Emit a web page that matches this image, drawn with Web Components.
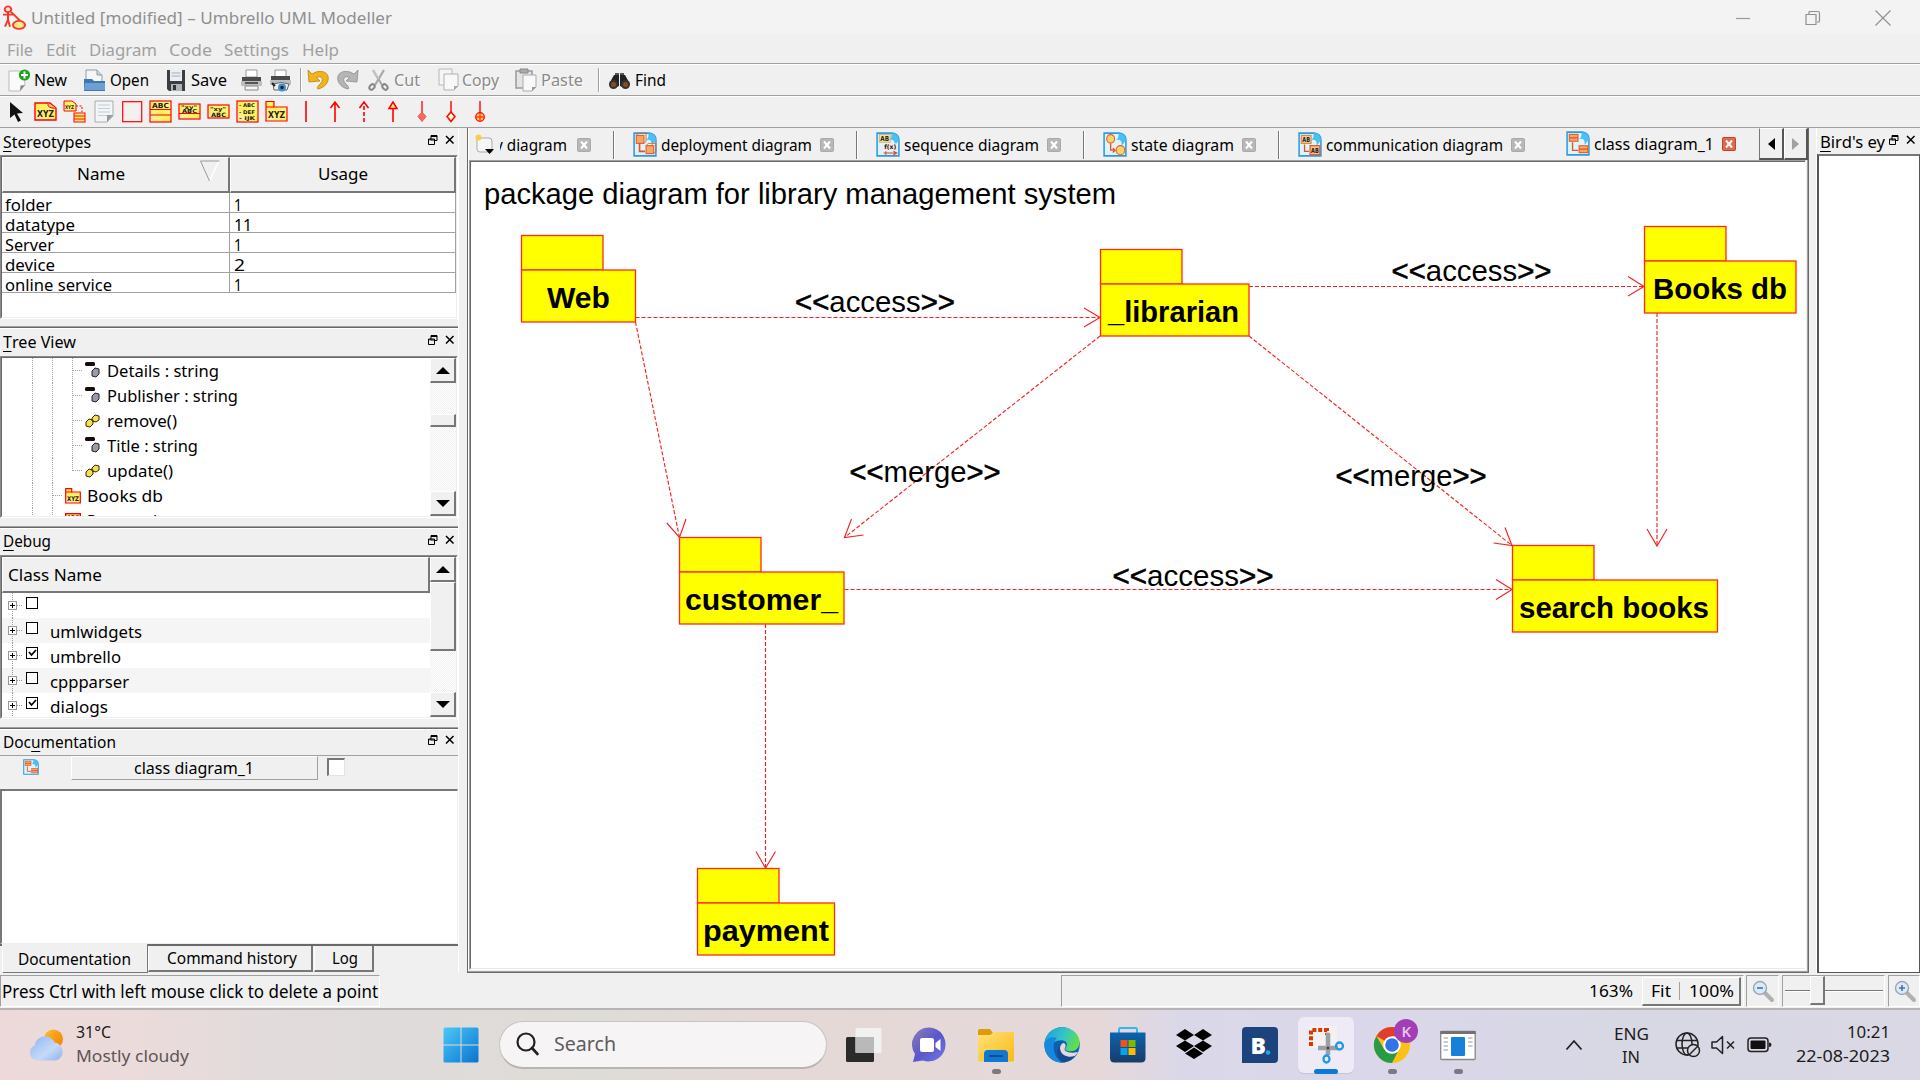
<!DOCTYPE html>
<html lang="en">
<head>
<meta charset="utf-8">
<title>Umbrello UML Modeller</title>
<style>
html,body{margin:0;padding:0}
body{width:1920px;height:1080px;overflow:hidden;background:#f0f0f0;color:#000;font-family:"Noto Sans","Open Sans",sans-serif;font-size:17px}
</style>
</head>
<body>
<app-window></app-window>
<script>
const define = (name, css, html, after) => customElements.define(name, class extends HTMLElement {
  connectedCallback() {
    if (this.shadowRoot) return;
    const root = this.attachShadow({ mode: 'open' });
    root.innerHTML = `<style>*{box-sizing:border-box}u{text-decoration:none;border-bottom:1px solid #000;display:inline-block;line-height:17px;height:19px}${css}</style>${typeof html === 'function' ? html(this) : html}`;
    if (after) after(this, root);
  }
});

/* ---------- icons ---------- */
const R = '#f00';
const docPage = inner => `<path d="M1 1h14q6 1 6 6v14H1z" fill="#dff3fb" stroke="#2a9be0" stroke-width="1.4"/><path d="M14 1q1 4-2 6 6-1 5 5 3-3 4-5 0-6-7-6z" fill="#4cc0f5"/>${inner}`;
const ob = (x, y, w = 7, h = 7) => `<rect x="${x}" y="${y}" width="${w}" height="${h}" fill="#f7a868" stroke="#e2602c" stroke-width="1"/>`;
const tx = (x, y, s, t, l) => `<text x="${x}" y="${y}" font-size="${s}" font-weight="700" font-family="DejaVu Sans" textLength="${l}" lengthAdjust="spacingAndGlyphs" fill="#222">${t}</text>`;
const yg = '<linearGradient id="y" x1="1" y1="0" x2="0" y2="1"><stop offset="0" stop-color="#ff8"/><stop offset=".5" stop-color="#ffee58"/><stop offset="1" stop-color="#fff0b8"/></linearGradient>';
const ICONS = {
  app: ['24 30', `<g fill="none" stroke="#f33a2a" stroke-width="2"><circle cx="6" cy="5" r="3.3" fill="#fdd"/><path d="M6 8v9M1 11h10M6 17l-3 8M6 17l2 8M9 8l9 10"/><ellipse cx="17" cy="23" rx="6" ry="4.6" fill="#ffe98a"/></g>`],
  new: ['23 23', `<path d="M1 2h15l1 14-5 6H1z" fill="#fafafa" stroke="#bbb"/><path d="M12 22l.5-5.500 4.500-.5z" fill="#888"/><circle cx="16.500" cy="6" r="5.600" fill="#19a319"/><path d="M16.500 2.500v7M13 6h7" stroke="#fff" stroke-width="2"/>`],
  open: ['23 23', `<path d="M3 1h11l5 5v9H3z" fill="#f4f6f8" stroke="#8f9aa5"/><path d="M14 1v5h5" fill="#cdd6de" stroke="#8f9aa5"/><path d="M1 10h8l2 2h11v10H1z" fill="#3f77b4"/><path d="M2 14h20v7H1z" fill="#6f9fd2"/>`],
  save: ['23 23', `<path d="M2 1h18v21H4l-2-2z" fill="#3a3d42"/><rect x="5" y="1" width="12" height="11" fill="#eceff1"/><path d="M6.500 4h9M6.500 7h9" stroke="#aab"/><rect x="6" y="15" width="11" height="7" fill="#aeb3b8"/><rect x="8" y="16" width="3" height="5" fill="#333"/>`],
  print: ['23 23', `<path d="M6 1h11v7H6z" fill="#fff" stroke="#999"/><rect x="2" y="8" width="19" height="4" fill="#4a4a4a"/><rect x="1" y="12" width="21" height="5" rx="1" fill="#bdbdbd"/><path d="M5 14h13" stroke="#333" stroke-width="1.500"/><path d="M5 17h13v4H5z" fill="#f4f4f4" stroke="#888"/>`],
  preview: ['23 23', `<path d="M6 1h11v7H6z" fill="#fff" stroke="#999"/><rect x="2" y="7" width="19" height="4" fill="#4a4a4a"/><rect x="1" y="11" width="21" height="5" rx="1" fill="#bdbdbd"/><path d="M4 15q8-3 16 0l-2 6H5z" fill="#eee" stroke="#666"/><path d="M3 14l3 3" stroke="#222" stroke-width="2"/><circle cx="13" cy="18.500" r="4" fill="#3e8ed0"/><circle cx="13" cy="18.500" r="1.700" fill="#123"/>`],
  undo: ['23 23', `<path d="M1 1l1 12 11-1-3.500-3.500C15 6 18 11 12 16c-2 2-2 4-1 4 14-3 14-21-2-17L5 5z" fill="#f0b41c" stroke="#b98309" stroke-width=".8"/>`],
  redo: ['23 23', `<path d="M22 1l-1 12-11-1 3.500-3.500C8 6 5 11 11 16c2 2 2 4 1 4C-2 17-2-1 14 3l4 2z" fill="#b5b5b5" stroke="#8d8d8d" stroke-width=".8"/>`],
  cut: ['23 23', `<path d="M6 1l9 15M17 1L8 16" stroke="#a8a8a8" stroke-width="2.200"/><path d="M6 1l6 9" stroke="#d8d8d8"/><ellipse cx="5" cy="18" rx="3" ry="2.300" fill="none" stroke="#888" stroke-width="2" transform="rotate(-50 5 18)"/><ellipse cx="18" cy="18" rx="3" ry="2.300" fill="none" stroke="#888" stroke-width="2" transform="rotate(50 18 18)"/>`],
  copy: ['23 23', `<path d="M2 1h13v16H2z" fill="#f5f5f5" stroke="#b8b8b8"/><path d="M7 6h14v12l-4 4H7z" fill="#f8f8f8" stroke="#b0b0b0"/><path d="M17 22v-4h4z" fill="#aaa"/>`],
  paste: ['23 23', `<path d="M1 3h16v17H1z" fill="#e4e4e4" stroke="#999" stroke-width="1.500"/><path d="M5 1h8v4H5z" fill="#aaa" stroke="#888"/><path d="M8 7h13v12l-4 4H8z" fill="#f8f8f8" stroke="#aaa"/><path d="M17 23v-4h4z" fill="#999"/>`],
  find: ['23 23', `<path d="M7 4h4v9H7zM12 4h4v9h-4z" fill="#555"/><path d="M6 6L1 15l5 4 5-2V6zM17 6l5 9-5 4-5-2V6z" fill="#222"/><circle cx="5.500" cy="15.500" r="4.500" fill="#333"/><circle cx="5.500" cy="15.500" r="2.500" fill="#8a4b22"/><circle cx="17.500" cy="15.500" r="4.500" fill="#333"/><circle cx="17.500" cy="15.500" r="2.500" fill="#8a4b22"/>`],
  cursor: ['23 23', `<path d="M5 2l13 11-6 .5 4 7-3 1.500-3.500-7.500L5 18z" fill="#111"/>`],
  t1: ['23 23', `<path d="M1 3h15l6 5v12H1z" fill="url(#y)" stroke="${R}" stroke-width="1.400"/><path d="M14 3q-1 6 8 5" fill="#fb8" stroke="${R}"/>${tx(3, 17, 8, 'XYZ', 17)}`],
  t2: ['23 23', `<path d="M1 1h8l4 3v7H1z" fill="url(#y)" stroke="${R}"/>${tx(2, 9, 5, 'XYZ', 9)}<path d="M13 6h6v6" fill="none" stroke="${R}" stroke-dasharray="2 1.500"/><rect x="11" y="13" width="11" height="9" fill="url(#y)" stroke="${R}"/><path d="M11 16h11M11 19h11" stroke="${R}"/>`],
  t3: ['23 23', `<path d="M3 1h18v15l-6 6H3z" fill="#f2f5f7" stroke="#aaa"/><path d="M6 5h12M6 8.500h12M6 12h12M6 15.500h9" stroke="#c3cdd4"/><path d="M15 22v-7h6z" fill="#999"/>`],
  t4: ['23 23', `<rect x="1.700" y="1.700" width="19" height="20" fill="#f4f0ef" stroke="${R}" stroke-width="1.200"/>`],
  t5: ['23 23', `<rect x="1" y="1" width="21" height="21" fill="url(#y)" stroke="${R}" stroke-width="1.200"/><path d="M1 9.500h21M1 15h21" stroke="${R}" stroke-width="1.200"/>${tx(3, 8, 7, 'ABC', 17)}`],
  t6: ['23 23', `<rect x="1" y="4" width="21" height="15" fill="url(#y)" stroke="${R}" stroke-width="1.200"/><path d="M1 13.500h21" stroke="${R}"/>${tx(3, 8.5, 5, '"xy"', 16)}${tx(4, 12.500, 5.500, 'ABC', 15)}`],
  t7: ['23 23', `<rect x="1" y="5" width="21" height="13" fill="url(#y)" stroke="${R}" stroke-width="1.200"/>${tx(3, 10.500, 5.500, '"xy"', 16)}${tx(4, 16.500, 6, 'ABC', 15)}`],
  t8: ['23 23', `<rect x="1" y="1" width="21" height="21" fill="url(#y)" stroke="${R}" stroke-width="1.200"/>${tx(3, 7, 5, '- ABC', 16)}${tx(3, 14, 5, '- DEF', 16)}${tx(3, 20, 5, '- IJK', 16)}`],
  t9: ['23 23', `<path d="M1 7V1.500h8V7h13v14H1z" fill="url(#y)" stroke="${R}" stroke-width="1.200"/><path d="M1 7h8" stroke="${R}"/>${tx(3, 18, 8, 'XYZ', 17)}`],
  a1: ['23 23', `<path d="M12 1v21" stroke="${R}" stroke-width="1.600"/>`],
  a2: ['23 23', `<path d="M12 22V2M7.500 8L12 2l4.500 6" fill="none" stroke="${R}" stroke-width="1.600"/>`],
  a3: ['23 23', `<path d="M12 22V2" stroke="${R}" stroke-width="1.600" stroke-dasharray="4 2"/><path d="M7.500 8L12 2l4.500 6" fill="none" stroke="${R}" stroke-width="1.600"/>`],
  a4: ['23 23', `<path d="M12 22V8" stroke="${R}" stroke-width="1.600"/><path d="M8 8.500L12 2l4 6.500z" fill="#fe8" stroke="${R}" stroke-width="1.500"/>`],
  a5: ['23 23', `<path d="M12 1v12" stroke="${R}" stroke-width="1.300"/><path d="M12 12l4 4.500-4 5-4-5z" fill="#f66" stroke="#e55"/>`],
  a6: ['23 23', `<path d="M12 1v11" stroke="${R}" stroke-width="1.400"/><path d="M12 12l4 4.500-4 5-4-5z" fill="#ffc" stroke="${R}" stroke-width="1.500"/>`],
  a7: ['23 23', `<path d="M12 1v11" stroke="${R}" stroke-width="1.400"/><circle cx="12" cy="17" r="4.300" fill="#fc5" stroke="${R}" stroke-width="1.200"/><path d="M12 13v8M8 17h8" stroke="${R}" stroke-width=".9"/>`],
  deploy: ['22 22', docPage(ob(3, 3) + ob(12, 12) + '<path d="M6 10v7h5" fill="none" stroke="#e2502c" stroke-width="1.500"/><path d="M3 3l2-2h7v7l-2 2M12 12l2-2h7v7l-2 2" fill="none" stroke="#e2602c" stroke-width=".8"/>')],
  seq: ['22 22', docPage(`<rect x="3" y="2" width="10" height="7" fill="#f3e2a0" stroke="#c9a860" stroke-width=".7"/>${tx(4, 8, 6, 'AB', 8)}<rect x="7" y="10" width="12" height="6" fill="#fbe6da"/>${tx(7.500, 15, 5.500, 'f(x)', 11)}<path d="M7 18.500h12M16 17l3 1.500-3 1.500M9 17v3" stroke="#e2402c" fill="none"/>`)],
  state: ['22 22', docPage('<circle cx="7" cy="6" r="3.700" fill="#fbd465" stroke="#e2602c"/><circle cx="16" cy="16" r="4" fill="#fbd465" stroke="#e2602c"/><path d="M7 10v6h4M9 14l2 2-2 2" fill="none" stroke="#e2502c" stroke-width="1.200"/>')],
  comm: ['22 22', docPage(`<rect x="3" y="3" width="9" height="7" fill="#f3cf90" stroke="#d08850"/>${tx(4, 9, 6, 'AB', 7)}<rect x="11" y="12" width="9" height="8" fill="#f8c080" stroke="#e2502c"/>${tx(12, 18.500, 6, 'AB', 7)}<path d="M6 11v6h4" fill="none" stroke="#e2502c" stroke-width="1.200"/>`)],
  cls: ['22 22', docPage(ob(3, 3, 8, 6) + ob(12, 13, 8, 6) + '<path d="M6 10v7h5M3 6h8M12 16h8" fill="none" stroke="#e2502c" stroke-width="1.200"/>')],
  newtab: ['22 22', `<path d="M2 4h12q3 0 3 3v11H5q-3 0-3-3z" fill="#f6f6f6" stroke="#aaa"/><circle cx="3.500" cy="3.500" r="3" fill="#f7cf4a"/><path d="M10 15h9l-4.500 5z" fill="#000"/>`],
  attr: ['16 18', `<rect x="0" y="0" width="10" height="4" rx="1.500" fill="#180a0c"/><path d="M7 9l3-3 4 1v5l-3 3-4-1z" fill="#99a" stroke="#222"/>`],
  op: ['16 18', `<path d="M1 10l3-3 4 1v4l-3 3-4-1zM7 6l3-3 4 1v4l-3 2-4-1z" fill="#f5e050" stroke="#332a00"/>`],
  pkg: ['16 16', `<path d="M.7 4V.7h6V4h8.600v11H.7z" fill="url(#y)" stroke="${R}" stroke-width="1.200"/><path d="M1 4h6" stroke="${R}"/>${tx(2, 13, 6.500, 'XYZ', 12)}`],
  klass: ['16 16', `<rect x=".7" y=".7" width="14.600" height="15" fill="url(#y)" stroke="${R}" stroke-width="1.400"/>${tx(2, 7, 6.500, 'ABC', 12)}`],
  float: ['10 10', `<path d="M3 .5h6v5H3zM3 1.500h6M.5 4h6v5.500h-6zM.5 5h6" fill="none" stroke="#000"/><rect x="1" y="5.500" width="5" height="3.500" fill="#f0f0f0"/>`],
  close: ['10 10', `<path d="M1 1l7.500 7.500M8.500 1L1 8.500" stroke="#000" stroke-width="1.500"/>`],
  zo: ['22 22', `<path d="M12 12l8 8" stroke="#b0b0b0" stroke-width="4" stroke-linecap="round"/><circle cx="8" cy="8" r="6.500" fill="#dce9f6" stroke="#9aa7b5" stroke-width="1.400"/><path d="M5 8h6" stroke="#3f74b0" stroke-width="1.600"/>`],
  zi: ['22 22', `<path d="M12 12l8 8" stroke="#b0b0b0" stroke-width="4" stroke-linecap="round"/><circle cx="8" cy="8" r="6.500" fill="#dce9f6" stroke="#9aa7b5" stroke-width="1.400"/><path d="M5 8h6M8 5v6" stroke="#3f74b0" stroke-width="1.600"/>`],
  weather: ['37 32', `<linearGradient id="s" x1="0" y1="0" x2="1" y2="1"><stop offset="0" stop-color="#fbc02d"/><stop offset="1" stop-color="#f57c00"/></linearGradient><linearGradient id="c" x1="0" y1="0" x2="1" y2="1"><stop offset="0" stop-color="#8fb4f0"/><stop offset=".6" stop-color="#c6daf8"/><stop offset="1" stop-color="#8db0ee"/></linearGradient><circle cx="25.500" cy="10" r="9.500" fill="url(#s)"/><path d="M8 31.500a8 8 0 0 1-1.500-15 10.500 10.500 0 0 1 20-3 9.200 9.200 0 0 1 1.500 18z" fill="url(#c)"/>`],
  win: ['36 36', `<linearGradient id="w" x1="0" y1="0" x2="1" y2="1" gradientUnits="objectBoundingBox"><stop offset="0" stop-color="#4cc8f8"/><stop offset="1" stop-color="#0a73d0"/></linearGradient><path d="M2 .5h15.500v17H.5V2q0-1.500 1.500-1.500zM18.500.5H34q1.500 0 1.500 1.500v15.500h-17zM.5 18.500h17v17H2q-1.500 0-1.500-1.500zM18.500 18.500h17V34q0 1.500-1.500 1.500H18.500z" fill="url(#w)"/>`],
  search: ['24 24', `<circle cx="11" cy="10" r="8.500" fill="none" stroke="#222" stroke-width="2.200"/><path d="M17 16l5.500 6" stroke="#222" stroke-width="2.600" stroke-linecap="round"/>`],
  task: ['36 36', `<rect x="0" y="10" width="28" height="25" rx="1.500" fill="#2b2b2b"/><rect x="9.500" y="1" width="26" height="25" rx="1.500" fill="#f2f2f2" opacity=".93"/><rect x="9.500" y="10" width="18.500" height="16" fill="#b9b9b9"/>`],
  chat: ['36 36', `<linearGradient id="v" x1="0" y1="0" x2="1" y2="1"><stop offset="0" stop-color="#8d7fb5"/><stop offset=".5" stop-color="#5a57c9"/><stop offset="1" stop-color="#6f78e0"/></linearGradient><path d="M18 .5a17 17 0 1 1-7 33L1 35l2-8A17 17 0 0 1 18 .5z" fill="url(#v)"/><rect x="8" y="11" width="14" height="14" rx="2" fill="#fff"/><path d="M23.500 16l5-4v12l-5-4z" fill="#fff"/>`],
  folder: ['36 36', `<path d="M0 4q0-2 2-2h10l3 4v4H0z" fill="#dd9c0c"/><linearGradient id="f" x1="0" y1="0" x2="1" y2="1"><stop offset="0" stop-color="#ffe27a"/><stop offset="1" stop-color="#fcb913"/></linearGradient><path d="M0 8h12l4-3h20v28q0 1.500-1.500 1.500h-33Q0 34.500 0 33z" fill="url(#f)"/><path d="M6 35v-8q0-4 4-4h16q4 0 4 4v8z" fill="#1277d0"/><path d="M11 29h14" stroke="#0a4f97" stroke-width="2"/>`],
  edge: ['36 36', `<linearGradient id="e" x1="0" y1="0" x2="1" y2=".4"><stop offset="0" stop-color="#1a9de0"/><stop offset=".6" stop-color="#35c6c6"/><stop offset="1" stop-color="#62dd4c"/></linearGradient><circle cx="18" cy="18" r="17.700" fill="#0f5fae"/><path d="M1 14C3 5 10 .3 18 .3c10 0 17.500 7 17.500 15 0 6-4 9-9 9-4 0-6-1.500-5-3 3-4 1-8-4-8-8 0-14 6-13 13-3-3-4-8-3.500-12.300z" fill="url(#e)"/><path d="M1 15c2-4 8-6 12-4-6 5-4 21 6 24.500C8 36-1 27 1 15z" fill="#1688dd"/><path d="M21 21c-2 3 4 6 13 4-1 2-2 3-3.500 4-8 3-15-1-14.500-8 .3-3 2-5 4-5 2 1 2 3 1 5z" fill="#e4d9dd"/><path d="M16 19c-1 8 6 12 14 10.500-2 3-6 5-10 6-7-3-9-11-4-16.500z" fill="#124d90"/>`],
  store: ['36 36', `<path d="M9 8V2.500Q9 1 10.500 1h15Q27 1 27 2.500V8" fill="none" stroke="#35b6ee" stroke-width="2"/><linearGradient id="st" x1="0" y1="0" x2="0" y2="1"><stop offset="0" stop-color="#0a64ae"/><stop offset="1" stop-color="#183c69"/></linearGradient><path d="M0 5.500h35.500V31q0 4.500-4.500 4.500H4.500Q0 35.500 0 31z" fill="url(#st)"/><path d="M10.500 13h7v7h-7z" fill="#f25022"/><path d="M18.500 13h7v7h-7z" fill="#7fba00"/><path d="M10.500 21h7v7h-7z" fill="#00a4ef"/><path d="M18.500 21h7v7h-7z" fill="#ffb900"/>`],
  dropbox: ['36 36', `<path d="M9 2l9 6-9 5.500L0 8zM27 2l9 6-9 5.500L18 8zM9 13.500l9 5.500-9 6-9-6zM27 13.500l9 5.500-9 6-9-6zM18 20.500l9 6-9 5.500-9-5.500z" fill="#000"/>`],
  booking: ['36 36', `<path d="M4 0h28q4 0 4 4v28q0 4-4 4H0V4q0-4 4-4z" fill="#1d437c"/><text x="8.500" y="27" font-size="23" font-weight="800" font-family="Open Sans" fill="#fff">B</text><circle cx="26" cy="25.500" r="2.300" fill="#1ba9ee"/>`],
  snip: ['40 40', `<rect x="3" y="1" width="28" height="22" fill="#f4f1f2"/><path d="M5 21V5h16v5" fill="none" stroke="#d83b01" stroke-width="4" stroke-dasharray="4 1.800"/><path d="M22 8v22M12 23h20" stroke="#9aa0a6" stroke-width="4.500"/><circle cx="22" cy="23" r="1.500" fill="#444"/><ellipse cx="33.500" cy="21" rx="3.500" ry="3.500" fill="none" stroke="#1e9be4" stroke-width="2.300"/><ellipse cx="20.500" cy="34" rx="3" ry="3.500" fill="none" stroke="#1e9be4" stroke-width="2.300"/>`],
  chrome: ['46 44', `<g transform="translate(0 8)"><circle cx="18" cy="18" r="18" fill="#fbc116"/><path d="M18 18L2.400 9A18 18 0 0 1 33.600 9H18z" fill="#e33b2e"/><path d="M18 36A18 18 0 0 1 2.400 9l7.800 13.500L18 26l7-3.500z" fill="#2a9a46"/><circle cx="18" cy="18" r="8.800" fill="#fff"/><circle cx="18" cy="18" r="6.800" fill="#2f75e8"/></g><circle cx="32" cy="12" r="12" fill="#a23fb5"/><text x="27.500" y="17.500" font-size="15" font-weight="600" font-family="Open Sans" fill="#e8c9ee">K</text>`],
  appwin: ['36 36', `<rect x=".7" y="4.500" width="34.500" height="28" rx="1" fill="#fff" stroke="#8c8785" stroke-width="1.300"/><rect x=".3" y="4" width="35.400" height="3" fill="#77706e"/><rect x="11" y="10" width="14" height="19" rx="1" fill="#1680da"/><path d="M3.500 11h4.500M3.500 15h4.500M3.500 19h4.500M3.500 23h4.500M28 11h4.500M28 15h4.500M28 19h4.500" stroke="#bbb" stroke-width="1.500"/>`],
  chev: ['18 12', `<path d="M1.500 10.500L9 2l7.500 8.500" fill="none" stroke="#222" stroke-width="1.800"/>`],
  globe: ['26 26', `<g fill="none" stroke="#222" stroke-width="1.500"><circle cx="12" cy="12" r="11"/><ellipse cx="12" cy="12" rx="5" ry="11"/><path d="M1.500 8.500h21M1.500 16h21"/></g><circle cx="18.500" cy="18.500" r="6" fill="#d9d7e5" stroke="#222" stroke-width="1.500"/><path d="M14.500 22.500l8-8" stroke="#222" stroke-width="1.500"/>`],
  mute: ['26 20', `<path d="M1 7h4.500L11.500 1.500v17L5.500 13H1z" fill="none" stroke="#222" stroke-width="1.500" stroke-linejoin="round"/><path d="M16 6.500l7 7M23 6.500l-7 7" stroke="#222" stroke-width="1.500"/>`],
  battery: ['26 16', `<rect x="1" y="1" width="20" height="13.500" rx="3" fill="none" stroke="#222" stroke-width="1.500"/><rect x="3.500" y="3.500" width="15" height="8.500" rx="1" fill="#111"/><path d="M22 5.500q2.500 0 2.500 2.300T22 10z" fill="#222"/>`],
  min: ['16 16', `<path d="M1 8.500h14" stroke="#999" stroke-width="1.200"/>`],
  max: ['16 16', `<path d="M1 4.500h10v10H1z M4 4V2.500q0-1 1-1h8q1.500 0 1.500 1.500v8q0 1-1 1H12" fill="none" stroke="#909090" stroke-width="1.200"/>`],
  x: ['16 16', `<path d="M.5.5l15 15M15.500.5l-15 15" stroke="#909090" stroke-width="1.200"/>`],
  tabx: ['14 14', `<rect width="14" height="14" rx="2" fill="#aaa9a8"/><rect x="1" y="1" width="12" height="12" rx="1" fill="#b9b8b7"/><path d="M4 3.500l6 7M10 3.500l-6 7" stroke="#fff" stroke-width="2"/>`],
  tabxr: ['14 14', `<rect width="14" height="14" rx="2" fill="#c9402a"/><rect x="1" y="1" width="12" height="12" rx="1" fill="#e2694f"/><path d="M4 3.500l6 7M10 3.500l-6 7" stroke="#fff" stroke-width="2"/>`],
  sort: ['20 22', `<path d="M19 .5L9.500 21" stroke="#fff" stroke-width="1.500"/><path d="M19.500 1H.5L9.500 21" fill="none" stroke="#9a9a9a"/>`]
};
define('ui-icon', ':host{display:block;flex:none}svg{display:block;width:100%;height:100%;overflow:visible}', el => {
  const [vb, body] = ICONS[el.getAttribute('name')];
  el.style.width ||= vb.split(' ')[0] + 'px';
  el.style.height ||= vb.split(' ')[1] + 'px';
  return `<svg viewBox="0 0 ${vb}" preserveAspectRatio="none"><defs>${yg}</defs>${body}</svg>`;
});
const I = (name, ml = 0, st = '') => `<ui-icon name="${name}" style="margin-left:${ml}px;${st}"></ui-icon>`;

/* Text set to an exact width: <fit-text w="120">label</fit-text> */
define('fit-text', ':host{display:block;flex:none;line-height:24px;height:24px;white-space:pre}span{display:inline-block;transform-origin:0 50%}', '<span><slot></slot></span>', (el, root) => {
  const w = +el.getAttribute('w'), span = root.querySelector('span');
  el.style.width = w + 'px';
  if (span.offsetWidth) span.style.transform = `scaleX(${w / span.getBoundingClientRect().width})`;
});
const T = (text, w, ml = 0, st = '') => `<fit-text w="${w}" style="margin-left:${ml}px;${st}">${text}</fit-text>`;

/* ---------- window chrome ---------- */
define('title-bar', ':host{display:flex;align-items:center;height:34px;padding-top:1px;background:#f3f3f3;color:#8f8f8f}.c{margin-left:auto;display:flex;gap:54px;padding-right:29px}',
  I('app', 2, 'height:26px') + T('Untitled [modified] – Umbrello UML Modeller', 361, 5) + `<div class="c">${I('min')}${I('max')}${I('x')}</div>`);

define('menu-bar', ':host{display:flex;align-items:center;height:30px;padding-top:2px;color:#a0a0a0;border-bottom:1px solid #a0a0a0}',
  T('File', 26, 7) + T('Edit', 30, 13) + T('Diagram', 68, 13) + T('Code', 43, 12) + T('Settings', 65, 12) + T('Help', 37, 13));

define('tool-bar', ':host{display:flex;align-items:center;height:32px;border-top:1px solid #fff;border-bottom:1px solid #a0a0a0}:host([kind=uml]){padding-bottom:1px}:host([kind=main]) .dim{color:#8a8a8a;text-shadow:1px 1px #fff}.sep{width:2px;height:24px;background:#a0a0a0;border-right:1px solid #fff}.dim{display:flex}', el =>
  el.getAttribute('kind') === 'main'
    ? I('new', 8) + T('New', 33, 3) + I('open', 16) + T('Open', 39, 4) + I('save', 16) + T('Save', 36, 3) + I('print', 13) + I('preview', 6) +
      `<div class="sep" style="margin-left:8px"></div>` + I('undo', 5) + I('redo', 6) +
      `<div class="dim">${I('cut', 8, 'margin-top:1px')}${T('Cut', 26, 4)}${I('copy', 17)}${T('Copy', 37, 2)}${I('paste', 16)}${T('Paste', 42, 3)}</div>` +
      `<div class="sep" style="margin-left:15px"></div>` + I('find', 8) + T('Find', 31, 4)
    : I('cursor', 5) + I('t1', 6) + I('t2', 6) + I('t3', 6) + I('t4', 6) + I('t5', 5) + I('t6', 6) + I('t7', 6) + I('t8', 6) + I('t9', 6) +
      ['a1', 'a2', 'a3', 'a4', 'a5', 'a6', 'a7'].map(n => I(n, 6)).join(''));

/* ---------- left docks ---------- */
define('dock-panel', `:host{display:flex;flex-direction:column}
  :host([line]){border-top:1px solid #a0a0a0;box-shadow:inset 0 1px #696969,inset 0 2px #fff}
  header{display:flex;align-items:center;height:var(--head,27px);padding-left:3px;flex:none}
  .b{margin-left:auto;display:flex;gap:7px;margin-top:-3px;padding-right:3px}
  .body{flex:1;min-height:0;overflow:hidden;border:solid;border-width:1px 1px 1px 1px;border-color:#8a8a8a #fff #fff #8a8a8a;background:#fff}
  .in{height:100%;border:solid;border-width:1px;border-color:#696969 #eee #eee #696969;display:flex;flex-direction:column}
  :host([plain]) .body,:host([plain]) .in{border:0;background:none;margin:0}
  :host([plain]) header{border-bottom:1px solid #a0a0a0}`,
  '<header><slot name="title"></slot><div class="b"><ui-icon name="float"></ui-icon><ui-icon name="close"></ui-icon></div></header><div class="body"><div class="in"><slot></slot></div></div>');

define('head-cell', ':host{display:flex;align-items:center;height:36px;background:#f0f0f0;border:solid;border-width:1px 2px 2px 1px;border-color:#fff #777 #777 #fff;flex:none}', '<slot></slot>');

define('stereotype-table', `:host{display:block}.r{display:flex}.row{height:20px;border-bottom:1px solid #a0a0a0;display:flex}
  .row>div{height:19px}.a{width:228px;border-right:1px solid #a0a0a0;padding-left:3px}.u{width:226px;border-right:1px solid #a0a0a0;padding-left:5px}.row fit-text{height:19px;line-height:23px}`,
  `<div class="r"><head-cell style="width:228px">${T('Name', 48, 74, 'margin-top:-1px')}${I('sort', 75, 'margin-top:-8px')}</head-cell><head-cell style="width:226px">${T('Usage', 50, 87, 'margin-top:-1px')}</head-cell></div>` +
  [['folder', 47, '1', 6], ['datatype', 70, '11', 16], ['Server', 49, '1', 6], ['device', 50, '2', 9], ['online service', 107, '1', 6]]
    .map(([a, w, u, x]) => `<div class="row"><div class="a">${T(a, w)}</div><div class="u">${T(u, x + 2, -1)}</div></div>`).join(''));

define('scroll-bar', `:host{display:flex;flex-direction:column;width:26px;flex:none;background:repeating-conic-gradient(#fff 0 25%,#f0f0f0 0 50%) 0 0/2px 2px}
  div{background:#f0f0f0;border:solid;border-width:1px 2px 2px 1px;border-color:#fff #777 #777 #fff;flex:none}
  .k{height:25px;display:flex;align-items:center;justify-content:center}
  i{border:6px solid transparent;border-width:0 7px 7px;border-bottom-color:#000}.d i{border-width:7px 7px 0;border-top-color:#000}`,
  el => `<div class="k"><i></i></div><div style="margin-top:${el.getAttribute('gap')}px;height:${el.getAttribute('thumb')}px"></div><div class="k d" style="margin-top:auto"><i></i></div>`);

define('tree-view', `:host{display:flex;height:100%}.t{flex:1;overflow:hidden;height:158px}
  .row{height:25px;display:flex;align-items:center;margin-left:30px;border-left:1px dotted #a0a0a0;padding-left:19px}
  .l{height:25px;border-left:1px dotted #a0a0a0;display:flex;width:20px;flex:none}
  .h{width:10px;border-top:1px dotted #a0a0a0;flex:none}.e{height:13px;align-self:flex-start}`,
  `<div class="t">` +
  [['attr', 'Details : string', 112], ['attr', 'Publisher : string', 131], ['op', 'remove()', 70], ['attr', 'Title : string', 91], ['op', 'update()', 66]]
    .map(([i, t, w], n) => `<div class="row"><div class="l"></div><div class="l${n === 4 ? ' e' : ''}"></div><div class="h" style="margin-left:-20px"></div>${I(i, 3)}${T(t, w, 6, 'margin-top:1px')}</div>`).join('') +
  `<div class="row"><div class="l" style="margin-right:-20px"></div><div class="h"></div>${I('pkg', 3)}${T('Books db', 76, 6, 'margin-top:1px')}</div>` +
  `<div class="row"><div class="l" style="margin-right:-20px"></div><div class="h" style="visibility:hidden"></div>${I('klass', 3)}${T('Borrowed', 70, 6)}</div></div>` +
  `<scroll-bar gap="31" thumb="13"></scroll-bar>`);

define('debug-list', `:host{display:flex;height:100%}.t{flex:1;overflow:hidden}
  .row{height:25px;display:flex;align-items:flex-start}.row:nth-child(odd){background:#f5f5f5}
  .p{width:9px;height:9px;border:1px solid #999;margin:8px 0 0 6px;background:linear-gradient(#000,#000) 50% 50%/5px 1px no-repeat,linear-gradient(#000,#000) 50% 50%/1px 5px no-repeat,#fff;box-shadow:0 0 0 0 #fff}
  .g{width:9px;margin-left:6px;height:25px;flex:none;background:repeating-linear-gradient(#999 0 1px,transparent 1px 2px) 4px 0/1px 25px no-repeat}.g .p{margin:8px 0 0}
  .d{width:5px;border-top:1px dotted #999;margin-top:12px}
  .c{width:12px;height:12px;border:1px solid #000;margin:4px 0 0 4px;background:#fff}.c svg{display:block}`,
  `<div class="t"><head-cell>${T('Class Name', 94, 5, 'margin-top:1px')}</head-cell>` +
  [['', 0, 0], ['umlwidgets', 92, 0], ['umbrello', 71, 1], ['cppparser', 79, 0], ['dialogs', 58, 1]]
    .map(([t, w, c]) => `<div class="row"><div class="g"><div class="p"></div></div><div class="d"></div><div class="c" style="margin-left:4px">${c ? '<svg width="10" height="10"><path d="M2 4l2.500 3L9 2" fill="none" stroke="#000" stroke-width="1.800"/></svg>' : ''}</div>${t ? T(t, w, 12, 'margin-top:2px') : ''}</div>`).join('') +
  `</div><scroll-bar gap="0" thumb="69"></scroll-bar>`);

define('doc-editor', `:host{display:block}.top{display:flex;height:33px;align-items:flex-start}
  .lab{width:247px;height:24px;margin-left:32px;border:solid;border-width:1px;border-color:#fff #a0a0a0 #a0a0a0 #fff}
  .cb{width:18px;height:18px;margin:2px 0 0 9px;background:#fff;border:solid;border-width:2px 1px 1px 2px;border-color:#777 #e3e3e3 #e3e3e3 #777}
  .area{height:155px;background:#fff;border:solid;border-width:2px 1px 1px 2px;border-color:#777 #eee #eee #777}
  .tabs{display:flex;height:30px;border-top:2px solid #696969;align-items:flex-start;padding-left:2px}
  .tabs div{height:26px;border:solid;border-width:0 2px 2px 1px;border-color:#777 #777 #777 #fff;margin-right:1px}
  .tabs div.on{margin-top:-2px;padding-top:2px;background:#f0f0f0;height:30px;border-right-width:1px;margin-right:0}`,
  `<div class="top">${I('cls', 23, 'width:16px;height:16px;margin-top:3px')}<div class="lab">${T('class diagram_1', 120, 62, 'margin-top:-1px')}</div><div class="cb"></div></div><div class="area"></div>
  <div class="tabs"><div class="on" style="width:146px">${T('Documentation', 113, 15, 'margin-top:1px')}</div><div style="width:165px">${T('Command history', 130, 18)}</div><div style="width:60px">${T('Log', 26, 17)}</div></div>`);

define('left-dock', ':host{display:flex;flex-direction:column;width:459px;flex:none;border-right:1px solid #fff}dock-panel{flex:none}',
  `<dock-panel style="height:191px"><span slot="title">${T('<u>S</u>tereotypes', 88)}</span><stereotype-table></stereotype-table></dock-panel>
   <dock-panel line style="height:192px;margin-top:7px;--head:29px"><span slot="title">${T('<u>T</u>ree View', 73)}</span><tree-view></tree-view></dock-panel>
   <dock-panel line style="height:193px;margin-top:8px;--head:28px"><span slot="title">${T('<u>D</u>ebug', 48)}</span><debug-list></debug-list></dock-panel>
   <dock-panel line plain style="height:246px;margin-top:8px;--head:28px"><span slot="title">${T('Doc<u>u</u>mentation', 113)}</span><doc-editor></doc-editor></dock-panel>`);

/* ---------- diagram area ---------- */
define('tab-strip', `:host{display:flex;height:33px;align-items:center;padding-top:1px;padding-left:5px}
  .sep{width:2px;height:28px;background:#777;border-right:1px solid #fff;flex:none}
  .clip{width:67px;height:24px;overflow:hidden;margin-left:3px;flex:none}
  .nav{width:25px;height:32px;margin-top:-1px;border:solid;border-width:1px 2px 2px 1px;border-color:#fff #555 #555 #fff;display:flex;align-items:center;justify-content:center;flex:none}
  i{border:solid transparent;border-width:6px 7px 6px 0;border-right-color:#000}i.r{border-width:6px 0 6px 7px;border-left-color:#a0a0a0}`,
  I('newtab', 1) + `<div class="clip">${T('y diagram', 72, -5)}</div>` + I('tabx', 10) +
  `<div class="sep" style="margin-left:22px"></div>` + I('deploy', 18, 'width:24px;height:25px') + T('deployment diagram', 151, 4) + I('tabx', 8) +
  `<div class="sep" style="margin-left:22px"></div>` + I('seq', 18, 'width:24px;height:25px') + T('sequence diagram', 135, 4) + I('tabx', 8) +
  `<div class="sep" style="margin-left:22px"></div>` + I('state', 18, 'width:24px;height:25px') + T('state diagram', 103, 4) + I('tabx', 8) +
  `<div class="sep" style="margin-left:22px"></div>` + I('comm', 18, 'width:24px;height:25px') + T('communication diagram', 177, 4) + I('tabx', 8) +
  I('cls', 41, 'width:24px;height:25px;margin-top:-2px') + T('class diagram_1', 120, 4, 'margin-top:-2px') + I('tabxr', 8, 'margin-top:-2px') +
  `<div class="nav" style="margin-left:23px;border-left:1px solid #777"><i></i></div><div class="nav" style="width:24px"><i class="r"></i></div>`);

const pkg = (x, y, w, label, tx0, tw) => `<g fill="#ff0" stroke="#ff2a1a" stroke-width="1.300"><rect x="${x}" y="${y}" width="81.500" height="34.500"/><rect x="${x}" y="${y + 34.5}" width="${w}" height="52"/></g><text x="${tx0}" y="${y + 72.5}" font-weight="700" textLength="${tw}" lengthAdjust="spacingAndGlyphs">${label}</text>`;
const edge = (x1, y1, x2, y2, a, b, c, d) => `<path d="M${x1} ${y1}L${x2} ${y2}" stroke-dasharray="4 2"/><path d="M${a} ${b}L${x2} ${y2}L${c} ${d}"/>`;
const lab = (x, y, t, w) => `<text x="${x}" y="${y}" textLength="${w}" lengthAdjust="spacingAndGlyphs"><tspan stroke="#000" stroke-width=".6">&lt;&lt;</tspan>${t}<tspan stroke="#000" stroke-width=".6">&gt;&gt;</tspan></text>`;
define('uml-canvas', ':host{display:block;background:#fff}svg{display:block;font-family:"Liberation Sans",sans-serif;font-size:29.300px}',
  `<svg width="1334" height="806" viewBox="471 162 1334 806"><text x="484" y="204" textLength="632" lengthAdjust="spacingAndGlyphs">package diagram for library management system</text>
  <g fill="none" stroke="#f52222" stroke-width="1.150">
  ${edge(635.5, 317.5, 1100, 317.5, 1084, 308, 1084, 327)}${edge(635.5, 322, 679.5, 537.5, 666.8, 523, 686, 519)}
  ${edge(1100, 336, 844.5, 537.5, 851.5, 519, 863.5, 535)}${edge(1249, 336, 1512, 545.5, 1505, 527.5, 1493.5, 543)}
  ${edge(1249, 286.5, 1644, 286.5, 1628, 276.5, 1628, 296)}${edge(1657, 313, 1657, 546, 1647, 529, 1667, 529)}
  ${edge(844.5, 589.5, 1512, 589.5, 1496, 579.5, 1496, 599.5)}${edge(765.5, 624, 765.5, 868, 756, 851.5, 775.5, 851.5)}</g>
  ${pkg(521.5, 235.5, 114, 'Web', 547, 63)}${pkg(1100.5, 249.5, 148.5, '_librarian', 1108, 131)}${pkg(1644.5, 226.5, 151.5, 'Books db', 1653, 134)}
  ${pkg(679.5, 537.5, 164.5, 'customer_', 685, 153)}${pkg(1512.5, 545.5, 205, 'search books', 1519, 190)}${pkg(697.5, 868.5, 137, 'payment', 703, 126)}
  ${lab(795, 312, 'access', 160)}${lab(1391.5, 280.5, 'access', 160)}${lab(849.5, 482, 'merge', 151)}${lab(1335.5, 485.5, 'merge', 151)}${lab(1112.5, 585.5, 'access', 161)}</svg>`);

define('diagram-area', `:host{display:flex;flex-direction:column;width:1342px;margin-left:8px;flex:none;border:solid;border-width:0 1px 1px;border-color:#696969;box-shadow:inset -1px -1px #a0a0a0,inset 1px 0 #fff;padding:0 2px 2px 1px}
  .f{border:solid;border-width:1px;border-color:#a0a0a0 #fff #fff #a0a0a0}.g{border:solid;border-width:1px 0 1px 1px;border-color:#696969;border-bottom-color:#e8e8e8}tab-strip{margin-right:-2px}`,
  '<tab-strip></tab-strip><div class="f"><div class="g"><uml-canvas></uml-canvas></div></div>');

define('birds-eye', ':host{display:flex;flex-direction:column;flex:1;margin-left:7px;border-left:1px solid #fff}header{height:26px;display:flex;align-items:center;padding-left:3px;flex:none}.c{width:65px;overflow:hidden}.v{flex:1;background:#fff;border:1px solid #555;border-top:2px solid #777;border-left-width:2px}',
  `<header><div class="c">${T("<u>B</u>ird's ey", 65, 0, 'margin-top:1px')}</div>${I('float', 4, 'margin-top:-2px')}${I('close', 7, 'margin-top:-2px')}</header><div class="v"></div>`);

define('status-bar', `:host{display:flex;height:35px;padding-top:2px}
  .s{height:32px;border:solid;border-width:1px;border-color:#a0a0a0 #fff #fff #a0a0a0;display:flex;align-items:center;flex:none}
  .btn{display:flex;align-items:center;height:29px;width:99px;border:solid;border-width:1px 2px 2px 1px;border-color:#fff #777 #777 #fff}
  .sl{flex:1;height:2px;background:#777;border-bottom:1px solid #fff;margin:0 1px 0 2px;display:flex;align-items:center}
  .th{width:15px;height:29px;margin-left:25px;background:#f0f0f0;border:solid;border-width:1px 2px 2px 1px;border-color:#fff #777 #777 #fff;flex:none}`,
  `<div class="s" style="width:380px;font-size:18px">${T('Press Ctrl with left mouse click to delete a point', 376, 1)}</div>
  <div class="s" style="width:683px;margin-left:681px">${T('163%', 44, 527)}<div class="btn" style="margin-left:9px">${T('Fit', 20, 8)}<div style="width:1px;height:18px;background:#a0a0a0;margin-left:8px"></div>${T('100%', 45, 9)}</div></div>
  <div class="s" style="width:33px;margin-left:2px">${I('zo', 5)}</div><div class="s" style="width:103px;margin-left:3px"><div class="sl"><div class="th"></div></div></div><div class="s" style="width:32px;margin-left:3px">${I('zi', 5)}</div>`);

/* ---------- taskbar ---------- */
define('task-bar', `:host{display:flex;height:72px;border-top:2px solid #b9b2b4;align-items:center;background:linear-gradient(90deg,#edd9d9 0,#ecdbdb 130px,#e1dbdb 270px,#e0dbdb 400px,#dedcd6 600px,#e4d9d7 760px,#e6d8d9 1100px,#dad8e8 1180px,#dad7ea 1350px,#d8d8e4 1650px,#d9d8e4 1920px)}
  .pill{width:328px;height:48px;margin-left:20px;border-radius:24px;background:#f6f4f4;border:1px solid #c9c3c3;border-bottom:2px solid #b9b3b3;display:flex;align-items:center;flex:none;color:#5c5c5c;font-size:19px}
  .app{width:56px;height:56px;display:flex;flex-direction:column;align-items:center;justify-content:center;margin-right:10px;border-radius:6px;flex:none;position:relative}
  .on{background:#eeebf7;box-shadow:0 1px 1px #c5c3d2}
  .dot::after{content:"";position:absolute;bottom:-1px;left:24px;width:9px;height:5px;border-radius:3px;background:#7d7980}
  .on::after{left:16px;width:24px;background:#0a7ad8}.col{display:flex;flex-direction:column;flex:none;margin-top:-2px}`,
  I('weather', 28) + `<div class="col" style="margin-left:11px;color:#1b1b1b">${T('31°C', 35)}${T('Mostly cloudy', 113, 0, 'color:#5d5558')}</div>` +
  I('win', 254) + `<div class="pill" style="margin-top:-1px">${I('search', 15)}${T('Search', 62, 15)}</div><div style="width:9px;flex:none"></div>` +
  ['task', 'chat', 'folder dot', 'edge', 'store', 'dropbox', 'booking', 'snip on dot', 'chrome dot', 'appwin dot'].map(s => { const [n, ...c] = s.split(' '); return `<div class="app ${c.join(' ')}">${I(n, n === 'chrome' ? 10 : 0, n === 'chrome' ? 'margin-top:-8px' : '')}</div>`; }).join('') +
  I('chev', 69) + `<div class="col" style="margin-left:31px;color:#1b1b1b;margin-top:0">${T('ENG', 35)}${T('IN', 18, 8, 'margin-top:-1px')}</div>` + I('globe', 26) + I('mute', 10) + I('battery', 10) +
  `<div class="col" style="margin-left:24px;color:#1b1b1b">${T('10:21', 43, 50)}${T('22-08-2023', 94, -1)}</div>`);

define('app-window', ':host{display:flex;flex-direction:column;width:1920px;height:1080px;overflow:hidden}.m{display:flex;height:845px;flex:none}',
  '<title-bar></title-bar><menu-bar></menu-bar><tool-bar kind="main"></tool-bar><tool-bar kind="uml"></tool-bar><div class="m"><left-dock></left-dock><diagram-area></diagram-area><birds-eye></birds-eye></div><status-bar></status-bar><task-bar></task-bar>');
</script>
</body>
</html>
